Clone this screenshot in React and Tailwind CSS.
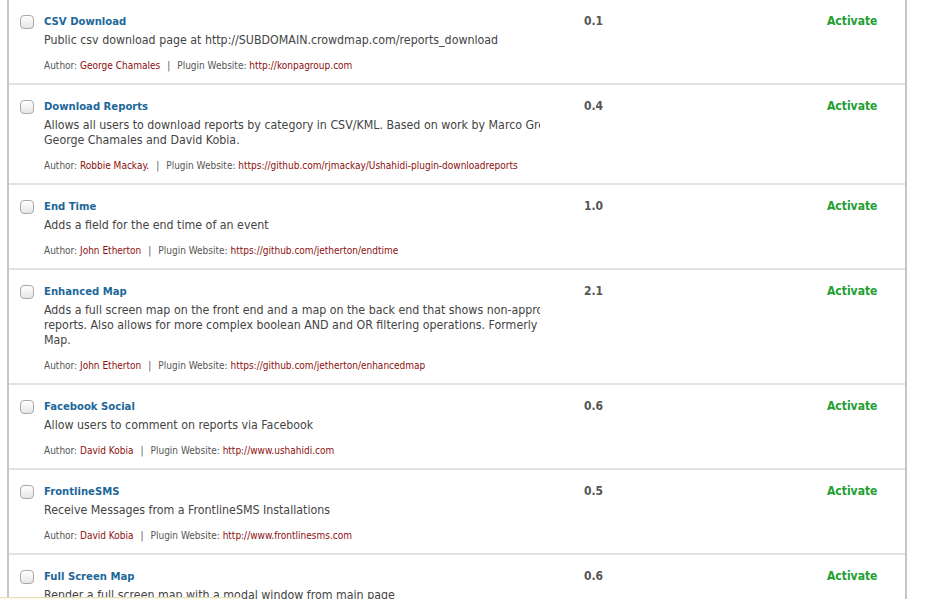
import React from 'react';

const plugins = [
  {
    name: 'CSV Download',
    desc: ['Public csv download page at http://SUBDOMAIN.crowdmap.com/reports_download'],
    author: 'George Chamales',
    site: 'http://konpagroup.com',
    version: '0.1',
  },
  {
    name: 'Download Reports',
    desc: [
      'Allows all users to download reports by category in CSV/KML. Based on work by Marco Gregorini,',
      'George Chamales and David Kobia.',
    ],
    author: 'Robbie Mackay.',
    site: 'https://github.com/rjmackay/Ushahidi-plugin-downloadreports',
    version: '0.4',
  },
  {
    name: 'End Time',
    desc: ['Adds a field for the end time of an event'],
    author: 'John Etherton',
    site: 'https://github.com/jetherton/endtime',
    version: '1.0',
  },
  {
    name: 'Enhanced Map',
    desc: [
      'Adds a full screen map on the front end and a map on the back end that shows non-approved',
      'reports. Also allows for more complex boolean AND and OR filtering operations. Formerly Admin',
      'Map.',
    ],
    author: 'John Etherton',
    site: 'https://github.com/jetherton/enhancedmap',
    version: '2.1',
  },
  {
    name: 'Facebook Social',
    desc: ['Allow users to comment on reports via Facebook'],
    author: 'David Kobia',
    site: 'http://www.ushahidi.com',
    version: '0.6',
  },
  {
    name: 'FrontlineSMS',
    desc: ['Receive Messages from a FrontlineSMS Installations'],
    author: 'David Kobia',
    site: 'http://www.frontlinesms.com',
    version: '0.5',
  },
  {
    name: 'Full Screen Map',
    desc: ['Render a full screen map with a modal window from main page'],
    author: 'David Kobia',
    site: 'http://www.ushahidi.com',
    version: '0.6',
  },
];

const PluginRow = ({ plugin, first }) => (
  <div
    className={`flex ${first ? 'pt-[15px] pb-[11px]' : 'pt-[14px] pb-[11px] border-t-2 border-[#e2e2e2]'}`}
  >
    {/* checkbox */}
    <div className="w-[35px] pl-[11px] pt-[1px]">
      <span className="block w-[14px] h-[14px] rounded-[4px] border border-[#a9a9a9] bg-gradient-to-b from-white to-[#e6e6e6]" />
    </div>

    {/* details - long descriptions get clipped by the column */}
    <div className="w-[496px] overflow-hidden">
      <div className="text-[11.2px] leading-[16px] font-bold text-[#1d6799]">{plugin.name}</div>
      <div className="mt-[3px] text-[12.3px] leading-[15px] text-[#444]">
        {plugin.desc.map((line) => (
          <div key={line} className="whitespace-nowrap">
            {line}
          </div>
        ))}
      </div>
      <div className="mt-[12px] text-[10px] leading-[12px] text-[#555] whitespace-nowrap">
        Author: <span className="text-[#8b0f0f]">{plugin.author}</span>
        <span className="mx-[7px]">|</span>
        Plugin Website: <span className="text-[#8b0f0f]">{plugin.site}</span>
      </div>
    </div>

    {/* version */}
    <div className="w-[287px] pl-[44px] text-[12px] leading-[14px] font-bold text-[#555]">
      {plugin.version}
    </div>

    {/* action */}
    <div className="text-[12px] leading-[14px] font-bold text-[#21a031]">Activate</div>
  </div>
);

export default function App() {
  return (
    <div
      className="min-h-screen bg-white overflow-hidden"
      style={{ fontFamily: '"DejaVu Sans Condensed", "DejaVu Sans", Tahoma, sans-serif' }}
    >
      <div className="ml-[7px] w-[900px] border-l-2 border-r-2 border-[#c6c6c6] mt-[-1px] h-[601px]">
        {plugins.map((p, i) => (
          <PluginRow key={p.name} plugin={p} first={i === 0} />
        ))}
      </div>
      <div className="fixed bottom-0 left-0 w-[240px] h-[2px] bg-[#fbf8e3] border-t border-[#e6e0b8]" />
    </div>
  );
}
